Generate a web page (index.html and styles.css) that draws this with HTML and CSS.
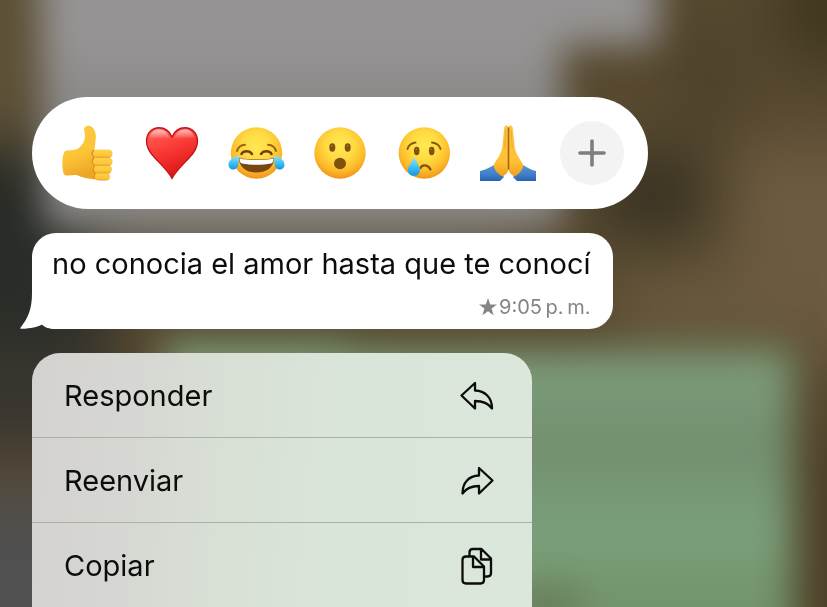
FILE: index.html
```html
<!DOCTYPE html>
<html lang="es">
<head>
<meta charset="utf-8">
<meta name="viewport" content="width=device-width, initial-scale=1">
<title>Mensaje</title>
<link rel="stylesheet" href="styles.css">
</head>
<body>
<svg class="backdrop" viewBox="0 0 827 607" preserveAspectRatio="none" aria-hidden="true">
  <defs>
    <filter id="soft" x="-30%" y="-30%" width="160%" height="160%" color-interpolation-filters="sRGB"><feGaussianBlur stdDeviation="18"/></filter>
    <filter id="wide" x="-60%" y="-60%" width="220%" height="220%" color-interpolation-filters="sRGB"><feGaussianBlur stdDeviation="30"/></filter>
    <linearGradient id="grey" x1="0" y1="0" x2="0" y2="1"><stop offset="0" stop-color="#949292"/><stop offset=".4" stop-color="#969494"/><stop offset=".6" stop-color="#8b8988"/><stop offset="1" stop-color="#918f8e"/></linearGradient>
    <linearGradient id="green" x1="0" y1="0" x2="0" y2="1"><stop offset="0" stop-color="#7c9b78"/><stop offset=".1" stop-color="#7b9a78"/><stop offset=".27" stop-color="#728f6e"/><stop offset=".48" stop-color="#7ba07b"/><stop offset=".65" stop-color="#73946c"/><stop offset="1" stop-color="#73976c"/></linearGradient>
  </defs>
  <rect width="827" height="607" fill="#584a31"/>
  <g filter="url(#wide)">
    <rect x="730" y="145" width="200" height="210" fill="#6d5b40"/>
    <rect x="620" y="270" width="200" height="80" fill="#6a5a3e"/>
    <ellipse cx="827" cy="10" rx="50" ry="60" fill="#3f351f"/>
    <rect x="680" y="20" width="60" height="120" fill="#4d412a"/>
    <ellipse cx="655" cy="195" rx="58" ry="45" fill="#373222"/>
    <rect x="810" y="430" width="100" height="250" fill="#4b3e26"/>
    <rect x="-100" y="150" width="210" height="270" fill="#292c27"/>
    <rect x="-100" y="340" width="210" height="110" fill="#38362f"/>
    <rect x="-100" y="490" width="210" height="250" fill="#505050"/>
    <rect x="80" y="215" width="440" height="55" fill="#6c685f"/>
    <rect x="-80" y="-60" width="120" height="200" fill="#5e5238"/>
  </g>
  <g filter="url(#soft)">
    <path d="M38-80H658V45H562V225H45Z" fill="url(#grey)"/>
    <path d="M165 342H330L360 350H792V740H150Z" fill="url(#green)"/>
    <ellipse cx="548" cy="607" rx="38" ry="24" fill="#677d5a"/>
  </g>
</svg>

<main class="overlay">
  <div class="reactions" role="group" aria-label="Reacciones">
    <button class="reaction" type="button" aria-label="Me gusta">
      <svg viewBox="0 0 64 64" aria-hidden="true">
        <defs>
          <linearGradient id="skin" x1="0" y1="0" x2=".3" y2="1"><stop offset="0" stop-color="#ffcb42"/><stop offset=".6" stop-color="#fcc436"/><stop offset="1" stop-color="#eda526"/></linearGradient>
          <linearGradient id="finger" x1="0" y1="0" x2="0" y2="1"><stop offset="0" stop-color="#ffd34e"/><stop offset=".7" stop-color="#fdc539"/><stop offset="1" stop-color="#e9a424"/></linearGradient>
        </defs>
        <path d="M9 30C15 28.600 20 30 23.500 26.500C27.500 22.500 30 18.500 28.500 11C27 6 30.500 4 34 5C39 6.500 40.800 14 39.500 20L38.500 29L46 30V58C37 59 27 57 22 54.500C18 53 13 55.500 8.500 54C5.500 50 5.500 34 9 30Z" fill="url(#skin)"/>
        <path d="M38 29C35.500 31.500 36 34 38 36C35.500 39 36 43 39 45C36.500 48 37 51 40 53C37.500 55 38.500 57 41 58" fill="none" stroke="#dc951d" stroke-width="1.600"/>
        <rect x="39" y="51.500" width="15" height="8" rx="4" fill="url(#finger)"/>
        <rect x="38" y="44" width="18" height="8.500" rx="4.200" fill="url(#finger)"/>
        <rect x="37" y="36.500" width="19.600" height="8.500" rx="4.200" fill="url(#finger)"/>
        <rect x="37" y="28.500" width="19.600" height="8.500" rx="4.200" fill="url(#finger)"/>
      </svg>
    </button>
    <button class="reaction" type="button" aria-label="Me encanta">
      <svg viewBox="0 0 64 64" aria-hidden="true">
        <defs>
          <linearGradient id="heart" x1=".3" y1="0" x2=".7" y2="1"><stop offset="0" stop-color="#ff6057"/><stop offset=".35" stop-color="#fb3e39"/><stop offset=".75" stop-color="#e8201f"/><stop offset="1" stop-color="#c70d16"/></linearGradient>
          <linearGradient id="gloss" x1="0" y1="0" x2="0" y2="1"><stop offset="0" stop-color="#fff" stop-opacity=".65"/><stop offset="1" stop-color="#fff" stop-opacity="0"/></linearGradient>
        </defs>
        <path d="M32 57.500C29 51 21 43.500 15 37C9 31 6.500 26 6.500 20C6.500 12 12 6.800 19 6.800C25 6.800 29.500 10 32 16C34.500 10 39 6.800 45 6.800C52 6.800 57.500 12 57.500 20C57.500 26 55 31 49 37C43 43.500 35 51 32 57.500Z" fill="url(#heart)" stroke="#c3141c" stroke-width="1.400" stroke-linejoin="round"/>
        <path d="M9.500 18C10 11 15 8.500 19 8.500C25 8.500 28 12 30 18C23 17 15 17 9.500 18ZM34 18C36 12 39 8.500 45 8.500C49 8.500 54 11 54.500 18C49 17 41 17 34 18Z" fill="url(#gloss)"/>
      </svg>
    </button>
    <button class="reaction" type="button" aria-label="Me divierte">
      <svg viewBox="0 0 64 64" aria-hidden="true">
        <defs>
          <radialGradient id="face" cx=".5" cy=".36" r=".68"><stop offset="0" stop-color="#ffe852"/><stop offset=".4" stop-color="#ffdb43"/><stop offset=".72" stop-color="#fdbb29"/><stop offset="1" stop-color="#ec8a1a"/></radialGradient>
          <linearGradient id="tear" x1="0" y1="0" x2="0" y2="1"><stop offset="0" stop-color="#8fe4ff"/><stop offset=".6" stop-color="#38baf4"/><stop offset="1" stop-color="#1794df"/></linearGradient>
        </defs>
        <circle cx="32.500" cy="32" r="25.700" fill="url(#face)"/>
        <path d="M13 30C14 26.500 17 24 21 23.800M44 23.800C48 24 51 26.500 52 30" fill="none" stroke="#9b6410" stroke-width="2" stroke-linecap="round"/>
        <path d="M17.500 33C19 29.500 25.500 29 28 33M37 33C39.500 29 46 29.500 47.500 33" fill="none" stroke="#714012" stroke-width="2.400" stroke-linecap="round"/>
        <path d="M15 37C26 39 39 39 50 37C50 46 43 51.500 32.500 51.500C22 51.500 15 46 15 37Z" fill="#794713"/>
        <path d="M15.500 37.500C26 39.500 39 39.500 49.500 37.500C49.500 40.500 48.500 42 47 42.500C38 44.200 27 44.200 18 42.500C16.500 42 15.500 40.500 15.500 37.500Z" fill="#fff"/>
        <path d="M15.500 34.500C8 36 4.500 40 4.500 43.500C4.500 50.500 14 50 14.500 43C14.700 40 14.500 37.500 15.500 34.500ZM49.500 34.500C57 36 60.500 40 60.500 43.500C60.500 50.500 51 50 50.500 43C50.300 40 50.500 37.500 49.500 34.500Z" fill="url(#tear)"/>
      </svg>
    </button>
    <button class="reaction" type="button" aria-label="Me asombra">
      <svg viewBox="0 0 64 64" aria-hidden="true">
        <circle cx="32" cy="32" r="25.700" fill="url(#face)"/>
        <g fill="#81500c"><ellipse cx="24.300" cy="26.500" rx="3" ry="4.200"/><ellipse cx="39.700" cy="26.500" rx="3" ry="4.200"/><ellipse cx="32" cy="42.500" rx="6" ry="5.800"/></g>
        <g fill="#a57129"><ellipse cx="24" cy="24.800" rx="1" ry="1"/><ellipse cx="39.500" cy="24.800" rx="1" ry="1"/></g>
      </svg>
    </button>
    <button class="reaction" type="button" aria-label="Me entristece">
      <svg viewBox="0 0 64 64" aria-hidden="true">
        <circle cx="32.300" cy="32" r="25.700" fill="url(#face)"/>
        <path d="M15.500 28C16.500 24.500 19.500 22 23.500 21.500M40 21.500C44 22 47.500 24.500 48.500 28" fill="none" stroke="#8c590d" stroke-width="1.900" stroke-linecap="round"/>
        <g fill="#81500c"><ellipse cx="24.700" cy="30" rx="2.800" ry="4.200"/><ellipse cx="39.700" cy="30" rx="2.800" ry="4.200"/></g>
        <g fill="#a57129"><circle cx="24.300" cy="28.300" r=".9"/><circle cx="39.300" cy="28.300" r=".9"/></g>
        <path d="M28.500 47C30 43.200 36 43.200 38.500 48.500" fill="none" stroke="#81500c" stroke-width="2.200" stroke-linecap="round"/>
        <path d="M22.500 36C20 41 15.800 45 15.800 49C15.800 52.500 18.500 54.800 22 54.800C25.500 54.800 28 52.500 28 49C28 45 24 41 22.500 36Z" fill="url(#tear)"/>
      </svg>
    </button>
    <button class="reaction" type="button" aria-label="Gracias">
      <svg viewBox="0 0 64 64" aria-hidden="true">
        <defs>
          <linearGradient id="sleeve" x1="0" y1="0" x2="0" y2="1"><stop offset="0" stop-color="#5c93d2"/><stop offset=".6" stop-color="#3f7fc8"/><stop offset="1" stop-color="#2a63b0"/></linearGradient>
          <linearGradient id="palm" x1="0" y1="0" x2="0" y2="1"><stop offset="0" stop-color="#ffc540"/><stop offset=".7" stop-color="#ffc235"/><stop offset="1" stop-color="#ed9f1c"/></linearGradient>
        </defs>
        <path d="M4 50C9 49 14 46 18 44L28 56L24 60H4ZM60 50C55 49 51 46 47 44L37 56L41 60H60Z" fill="url(#sleeve)"/>
        <path d="M32.500 6C31 3.700 28.500 4.300 28.200 7L26.500 24C26 33 20.500 38 17.500 44.500C19 50 22 53 26.500 55.500C29 54 32.500 52 32.500 47ZM32.500 6C34 3.700 36.500 4.300 36.800 7L38.500 24C39 33 44.500 38 47.500 44.500C46 50 43 53 38.500 55.500C36 54 32.500 52 32.500 47Z" fill="url(#palm)"/>
        <path d="M32.500 7V48" stroke="#a9670d" stroke-width="1.600" stroke-linecap="round"/>
        <path d="M29.800 9L28.700 27M35.200 9L36.300 27" stroke="#eda927" stroke-width="1" stroke-linecap="round"/>
      </svg>
    </button>
    <button class="reaction reaction-more" type="button" aria-label="Más reacciones">
      <svg viewBox="0 0 64 64" aria-hidden="true"><path d="M32 20V44M20 32H44" fill="none" stroke="#7e7e7e" stroke-width="3.600" stroke-linecap="round"/></svg>
    </button>
  </div>

  <article class="bubble">
    <svg class="tail" viewBox="0 0 36 36" aria-hidden="true"><path d="M12 0C12 16 8 25 1 34C-.5 35.500 .5 36 2 35.800C11 35.500 17 34 22 31.500C25 34.500 29 36 36 36V0Z" fill="#fff"/></svg>
    <p class="message">no conocia el amor hasta que te conocí</p>
    <p class="meta">
      <svg class="star" viewBox="0 0 18 18" role="img" aria-label="Destacado"><path d="M9 0L11.200 6.400L18 6.500L12.600 10.600L14.600 17.200L9 13.300L3.400 17.200L5.400 10.600L0 6.500L6.800 6.400Z" fill="#858585"/></svg>
      <time datetime="21:05">9:05&#8239;p.&#8239;m.</time>
    </p>
  </article>

  <div class="menu" role="menu">
    <button class="item" type="button" role="menuitem">Responder
      <svg viewBox="0 0 36 40" aria-hidden="true"><path d="M2.500 19.500L16 7V14.500C26 14.700 33 21.500 33 32.500C29.500 27.500 24 25 16 25V32.500Z"/></svg>
    </button>
    <button class="item" type="button" role="menuitem">Reenviar
      <svg viewBox="0 0 36 40" aria-hidden="true"><path d="M33.500 19.500L20 7V14.500C10 14.700 3.500 21.500 3.500 32.500C7 27.500 12 25 20 25V32.500Z"/></svg>
    </button>
    <button class="item" type="button" role="menuitem">Copiar
      <svg viewBox="0 0 36 40" aria-hidden="true"><path d="M7 10.500H15L25 20.500V34C25 36 23.500 37.500 21.500 37.500H7C5 37.500 3.500 36 3.500 34V14C3.500 12 5 10.500 7 10.500ZM14 10.500V21H25M10.500 10.500V6.500C10.500 4.500 12 3 14 3H22.500L32 12.500V27C32 29 30.500 30.500 28.500 30.500H25M22 3V13.500H32"/></svg>
    </button>
  </div>
</main>
</body>
</html>
```
FILE: styles.css
```css
* {
  box-sizing: border-box;
}

body {
  margin: 0;
  min-height: 100vh;
  background: #57492f;
  color: #0b0d0b;
  font-family: Inter, "Liberation Sans", sans-serif;
}

button {
  border: 0;
  margin: 0;
  padding: 0;
  background: none;
  color: inherit;
  font: inherit;
  cursor: pointer;
}

svg {
  display: block;
}

.backdrop {
  position: fixed;
  inset: 0;
  width: 100%;
  height: 100%;
  z-index: -1;
}

.overlay {
  display: flex;
  flex-direction: column;
  align-items: flex-start;
  gap: 24px;
  padding: 97px 32px 0;
}

.reactions {
  display: flex;
  gap: 20px;
  padding: 24px;
  border-radius: 56px;
  background: #fff;
}

.reaction {
  width: 64px;
  height: 64px;
  border-radius: 50%;
}

.reaction-more {
  background: #f3f3f3;
}

.bubble {
  position: relative;
  padding: 11px 22px 8px 20px;
  border-radius: 24px;
  background: #fff;
}

.tail {
  position: absolute;
  left: -12px;
  bottom: 0;
  width: 36px;
  height: 36px;
}

.message {
  position: relative;
  margin: 0;
  font-size: 29px;
  line-height: 40px;
}

.meta {
  display: flex;
  align-items: center;
  justify-content: flex-end;
  gap: 2px;
  margin: 9px 0 0;
  color: #858585;
  font-size: 20px;
  line-height: 28px;
}

.star {
  width: 18px;
  height: 18px;
}

.menu {
  width: 500px;
  max-width: 100%;
  overflow: hidden;
  border-radius: 28px 28px 0 0;
  background: linear-gradient(95deg, #d4d2d0 0%, #d6d6d2 18%, #d8dfd5 38%, #dae5d9 60%, #dce7db 100%);
}

.item {
  display: flex;
  align-items: center;
  justify-content: space-between;
  width: 100%;
  height: 84px;
  padding: 2px 37px 0 32px;
  font-size: 29px;
  line-height: 40px;
  text-align: left;
}

.item + .item {
  height: 85px;
  border-top: 1px solid #a9b1a8;
}

.item svg {
  width: 36px;
  height: 40px;
  fill: none;
  stroke: #0b0d0b;
  stroke-width: 2.3;
  stroke-linejoin: round;
  stroke-linecap: round;
}
```
